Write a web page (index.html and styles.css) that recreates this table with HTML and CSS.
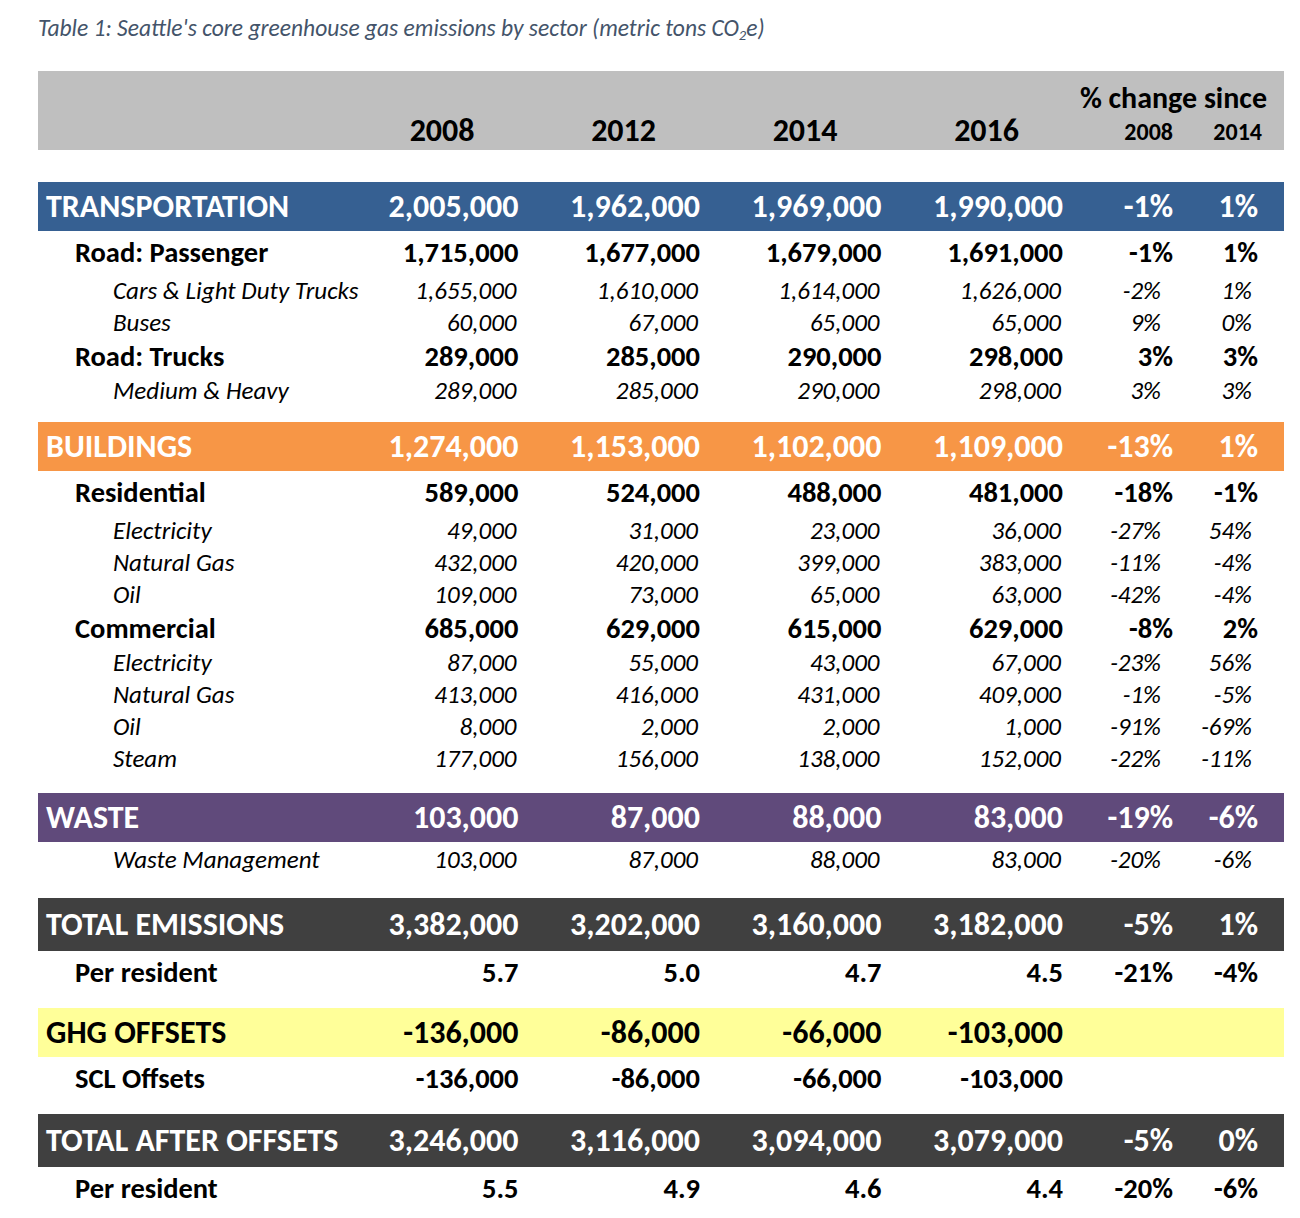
FILE: index.html
```html
<!DOCTYPE html>
<html lang="en">
<head>
<meta charset="utf-8">
<title>Seattle core GHG emissions</title>
<link rel="stylesheet" href="styles.css">
</head>
<body>
<div class="page">
  <p class="caption">Table 1: Seattle's core greenhouse gas emissions by sector (metric tons CO<sub>2</sub>e)</p>
  <table class="ghg">
    <colgroup>
      <col class="c-label"><col class="c-num"><col class="c-num"><col class="c-num"><col class="c-num"><col class="c-p1"><col class="c-p2">
    </colgroup>
    <thead>
      <tr class="h1">
        <th></th><th></th><th></th><th></th><th></th>
        <th colspan="2" class="since">% change since</th>
      </tr>
      <tr class="h2">
        <th></th>
        <th class="yr">2008</th><th class="yr">2012</th><th class="yr">2014</th><th class="yr">2016</th>
        <th class="pyr p1">2008</th><th class="pyr p2">2014</th>
      </tr>
    </thead>
    <tbody>
      <tr class="gap g1"><td colspan="7"></td></tr>
      <tr class="band blue"><td class="lbl">TRANSPORTATION</td><td>2,005,000</td><td>1,962,000</td><td>1,969,000</td><td>1,990,000</td><td class="p1">-1%</td><td class="p2">1%</td></tr>
      <tr class="sub first"><td class="lbl">Road: Passenger</td><td>1,715,000</td><td>1,677,000</td><td>1,679,000</td><td>1,691,000</td><td class="p1">-1%</td><td class="p2">1%</td></tr>
      <tr class="it"><td class="lbl">Cars &amp; Light Duty Trucks</td><td>1,655,000</td><td>1,610,000</td><td>1,614,000</td><td>1,626,000</td><td class="p1">-2%</td><td class="p2">1%</td></tr>
      <tr class="it"><td class="lbl">Buses</td><td>60,000</td><td>67,000</td><td>65,000</td><td>65,000</td><td class="p1">9%</td><td class="p2">0%</td></tr>
      <tr class="sub"><td class="lbl">Road: Trucks</td><td>289,000</td><td>285,000</td><td>290,000</td><td>298,000</td><td class="p1">3%</td><td class="p2">3%</td></tr>
      <tr class="it"><td class="lbl">Medium &amp; Heavy</td><td>289,000</td><td>285,000</td><td>290,000</td><td>298,000</td><td class="p1">3%</td><td class="p2">3%</td></tr>
      <tr class="gap g2"><td colspan="7"></td></tr>
      <tr class="band orange"><td class="lbl">BUILDINGS</td><td>1,274,000</td><td>1,153,000</td><td>1,102,000</td><td>1,109,000</td><td class="p1">-13%</td><td class="p2">1%</td></tr>
      <tr class="sub first"><td class="lbl">Residential</td><td>589,000</td><td>524,000</td><td>488,000</td><td>481,000</td><td class="p1">-18%</td><td class="p2">-1%</td></tr>
      <tr class="it"><td class="lbl">Electricity</td><td>49,000</td><td>31,000</td><td>23,000</td><td>36,000</td><td class="p1">-27%</td><td class="p2">54%</td></tr>
      <tr class="it"><td class="lbl">Natural Gas</td><td>432,000</td><td>420,000</td><td>399,000</td><td>383,000</td><td class="p1">-11%</td><td class="p2">-4%</td></tr>
      <tr class="it"><td class="lbl">Oil</td><td>109,000</td><td>73,000</td><td>65,000</td><td>63,000</td><td class="p1">-42%</td><td class="p2">-4%</td></tr>
      <tr class="sub"><td class="lbl">Commercial</td><td>685,000</td><td>629,000</td><td>615,000</td><td>629,000</td><td class="p1">-8%</td><td class="p2">2%</td></tr>
      <tr class="it"><td class="lbl">Electricity</td><td>87,000</td><td>55,000</td><td>43,000</td><td>67,000</td><td class="p1">-23%</td><td class="p2">56%</td></tr>
      <tr class="it"><td class="lbl">Natural Gas</td><td>413,000</td><td>416,000</td><td>431,000</td><td>409,000</td><td class="p1">-1%</td><td class="p2">-5%</td></tr>
      <tr class="it"><td class="lbl">Oil</td><td>8,000</td><td>2,000</td><td>2,000</td><td>1,000</td><td class="p1">-91%</td><td class="p2">-69%</td></tr>
      <tr class="it"><td class="lbl">Steam</td><td>177,000</td><td>156,000</td><td>138,000</td><td>152,000</td><td class="p1">-22%</td><td class="p2">-11%</td></tr>
      <tr class="gap g3"><td colspan="7"></td></tr>
      <tr class="band purple"><td class="lbl">WASTE</td><td>103,000</td><td>87,000</td><td>88,000</td><td>83,000</td><td class="p1">-19%</td><td class="p2">-6%</td></tr>
      <tr class="it wm"><td class="lbl">Waste Management</td><td>103,000</td><td>87,000</td><td>88,000</td><td>83,000</td><td class="p1">-20%</td><td class="p2">-6%</td></tr>
      <tr class="gap g4"><td colspan="7"></td></tr>
      <tr class="band dark tall"><td class="lbl">TOTAL EMISSIONS</td><td>3,382,000</td><td>3,202,000</td><td>3,160,000</td><td>3,182,000</td><td class="p1">-5%</td><td class="p2">1%</td></tr>
      <tr class="sub first"><td class="lbl">Per resident</td><td>5.7</td><td>5.0</td><td>4.7</td><td>4.5</td><td class="p1">-21%</td><td class="p2">-4%</td></tr>
      <tr class="gap g5"><td colspan="7"></td></tr>
      <tr class="band yellow"><td class="lbl">GHG OFFSETS</td><td>-136,000</td><td>-86,000</td><td>-66,000</td><td>-103,000</td><td class="p1"></td><td class="p2"></td></tr>
      <tr class="sub first"><td class="lbl">SCL Offsets</td><td>-136,000</td><td>-86,000</td><td>-66,000</td><td>-103,000</td><td class="p1"></td><td class="p2"></td></tr>
      <tr class="gap g6"><td colspan="7"></td></tr>
      <tr class="band dark tall"><td class="lbl">TOTAL AFTER OFFSETS</td><td>3,246,000</td><td>3,116,000</td><td>3,094,000</td><td>3,079,000</td><td class="p1">-5%</td><td class="p2">0%</td></tr>
      <tr class="sub first"><td class="lbl">Per resident</td><td>5.5</td><td>4.9</td><td>4.6</td><td>4.4</td><td class="p1">-20%</td><td class="p2">-6%</td></tr>
    </tbody>
  </table>
</div>
</body>
</html>
```
FILE: styles.css
```css
* { box-sizing: border-box; }
html, body { margin: 0; padding: 0; background: #ffffff; }
body {
  font-family: Carlito, Calibri, Lato, sans-serif;
  color: #000;
}
.page { padding: 15px 16px 0 38px; width: 1300px; }
.caption {
  margin: 0;
  font-style: italic;
  font-size: 23.5px;
  line-height: 26px;
  color: #44546a;
}
.caption sub { font-size: 0.62em; vertical-align: -0.25em; line-height: 0; }

.ghg {
  margin-top: 30px;
  border-collapse: collapse;
  table-layout: fixed;
  width: 1246px;
}
.c-label { width: 299px; }
.c-num { width: 181.5px; }
.c-p1 { width: 110px; }
.c-p2 { width: 111px; }

.ghg th, .ghg td { padding: 0; text-align: right; white-space: nowrap; }

thead tr { background: #bfbfbf; }
.h1 th { height: 42px; vertical-align: bottom; }
.h2 th { height: 37px; vertical-align: middle; }
.ghg th.since { font-size: 30px; font-weight: 700; padding-right: 17px; line-height: 30px; }
.ghg th.yr { font-size: 32px; font-weight: 700; padding-right: 44px; line-height: 32px; padding-bottom: 2px; }
.ghg th.pyr { font-size: 24px; font-weight: 700; line-height: 26px; }
.ghg th.pyr.p1 { padding-right: 0; }
.ghg th.pyr.p2 { padding-right: 22px; }

.ghg td.p1 { padding-right: 0; }
.ghg td.p2 { padding-right: 26px; }

.gap td { padding: 0; }
.g1 td { height: 32px; }
.g2 td { height: 15px; }
.g3 td { height: 18px; }
.g4 td { height: 20px; }
.g5 td { height: 13px; }
.g6 td { height: 13px; }

.band td { height: 49px; font-size: 32px; font-weight: 700; color: #fff; line-height: 32px; vertical-align: middle; }
.band.tall td { height: 53px; }
.band .lbl { text-align: left; padding-left: 8px; }
.blue { background: #366092; }
.orange { background: #f79646; }
.purple { background: #604a7b; }
.dark { background: #404040; }
.yellow { background: #ffff99; }
.yellow td { color: #000; }

.sub td { height: 36px; font-size: 28.5px; font-weight: 700; line-height: 30px; vertical-align: middle; }
.sub.first td { height: 44px; }
.sub .lbl { text-align: left; padding-left: 37px; }

.it td { height: 32px; font-size: 25px; font-style: italic; line-height: 28px; vertical-align: middle; }
.it td:not(.lbl) { padding-right: 2px; }
.it td.p1 { padding-right: 12px; }
.it td.p2 { padding-right: 32px; }
.it.wm td { height: 36px; }
.it .lbl { text-align: left; padding-left: 75px; }
```
